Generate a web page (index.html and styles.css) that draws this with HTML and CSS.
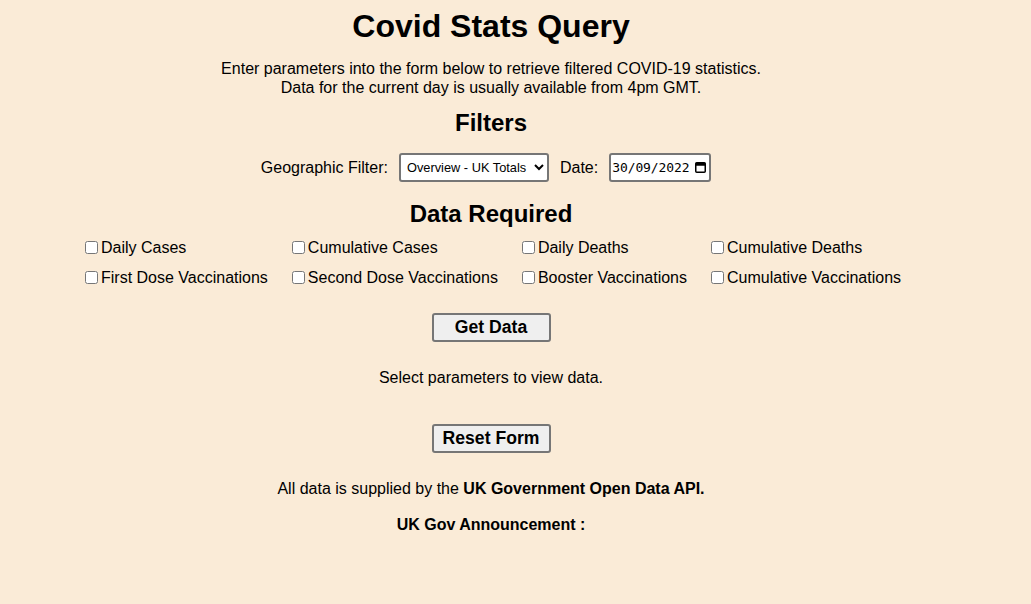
FILE: index.html
```html
<!DOCTYPE html>
<html lang="en">
<head>
<meta charset="utf-8">
<title>Covid Stats Query</title>
<link rel="stylesheet" href="styles.css">
</head>
<body>
<div class="page">
  <h1 class="title">Covid Stats Query</h1>
  <p class="intro">Enter parameters into the form below to retrieve filtered COVID-19 statistics.<br>Data for the current day is usually available from 4pm GMT.</p>

  <h2 class="section">Filters</h2>
  <div class="filter-row">
    <label class="filter-label" for="geo">Geographic Filter:</label>
    <select id="geo" class="geo-select">
      <option>Overview - UK Totals</option>
    </select>
    <label class="filter-label date-label">Date:</label>
    <div class="date-field">
      <span class="date-text">30/09/2022</span>
      <svg class="cal-icon" width="11" height="11" viewBox="0 0 11 11" aria-hidden="true">
        <rect x="0.75" y="0.75" width="9.5" height="9.5" rx="1" fill="none" stroke="#000" stroke-width="1.5"/>
        <rect x="0.75" y="0.75" width="9.5" height="3" fill="#000"/>
      </svg>
    </div>
  </div>

  <h2 class="section section-data">Data Required</h2>
  <div class="checks">
    <label class="check"><input type="checkbox">Daily Cases</label>
    <label class="check"><input type="checkbox">Cumulative Cases</label>
    <label class="check"><input type="checkbox">Daily Deaths</label>
    <label class="check"><input type="checkbox">Cumulative Deaths</label>
    <label class="check"><input type="checkbox">First Dose Vaccinations</label>
    <label class="check"><input type="checkbox">Second Dose Vaccinations</label>
    <label class="check"><input type="checkbox">Booster Vaccinations</label>
    <label class="check"><input type="checkbox">Cumulative Vaccinations</label>
  </div>

  <button class="btn btn-get" type="button">Get Data</button>
  <p class="status">Select parameters to view data.</p>
  <button class="btn btn-reset" type="button">Reset Form</button>

  <p class="source">All data is supplied by the <strong>UK Government Open Data API.</strong></p>
  <p class="announce"><strong>UK Gov Announcement :</strong></p>
</div>
</body>
</html>
```
FILE: styles.css
```css
html, body {
  background: #faebd7;
}
body {
  margin: 8px;
  color: #000;
  font-family: "Liberation Sans", Arial, sans-serif;
  font-size: 16px;
}
.page {
  width: 966px;
  text-align: center;
  display: flex;
  flex-direction: column;
  align-items: center;
}
.title {
  margin: 0;
  font-size: 32px;
  line-height: 37px;
  font-weight: bold;
}
.intro {
  margin: 14px 0 0;
  line-height: 19px;
}
.section {
  margin: 12px 0 0;
  font-size: 24px;
  line-height: 28px;
  font-weight: bold;
}
.section-data {
  margin-top: 17.5px;
}
.filter-row {
  margin-top: 16px;
  display: flex;
  align-items: center;
  height: 29px;
  padding-right: 10px;
}
.filter-label {
  line-height: 19px;
  margin-right: 11px;
}
.date-label {
  margin-left: 11px;
}
.geo-select {
  box-sizing: border-box;
  width: 150px;
  height: 29px;
  border: 2px solid #767676;
  border-radius: 3px;
  background-color: #fff;
  font-family: "Liberation Sans", Arial, sans-serif;
  font-size: 12.8px;
  color: #000;
  padding: 0 0 0 2px;
}
.date-field {
  box-sizing: border-box;
  width: 102px;
  height: 29px;
  border: 2px solid #767676;
  border-radius: 3px;
  background: #fff;
  display: flex;
  align-items: center;
  justify-content: space-between;
  padding: 0 3px 0 1px;
}
.date-text {
  font-family: "DejaVu Sans Mono", "Liberation Mono", monospace;
  font-size: 13px;
  letter-spacing: -0.1px;
}
.cal-icon {
  display: block;
}
.checks {
  margin-top: 10.5px;
  display: grid;
  grid-template-columns: repeat(4, auto);
  column-gap: 20px;
  row-gap: 11px;
  justify-content: center;
  text-align: left;
}
.check {
  display: flex;
  align-items: center;
  height: 19px;
  line-height: 19px;
  white-space: nowrap;
}
.check input {
  margin: 0 3px 0 4px;
  width: 13px;
  height: 13px;
}
.btn {
  box-sizing: border-box;
  width: 119px;
  height: 29px;
  border: 2px solid #767676;
  border-radius: 3px;
  background: #efefef;
  color: #000;
  font-family: "Liberation Sans", Arial, sans-serif;
  font-size: 17.6px;
  font-weight: bold;
  padding: 0;
}
.btn-get {
  margin-top: 25.5px;
}
.status {
  margin: 26.5px 0 0;
  line-height: 19px;
}
.btn-reset {
  margin-top: 36.5px;
}
.source {
  margin: 26.5px 0 0;
  line-height: 19px;
}
.announce {
  margin: 17px 0 0;
  line-height: 19px;
}
```
